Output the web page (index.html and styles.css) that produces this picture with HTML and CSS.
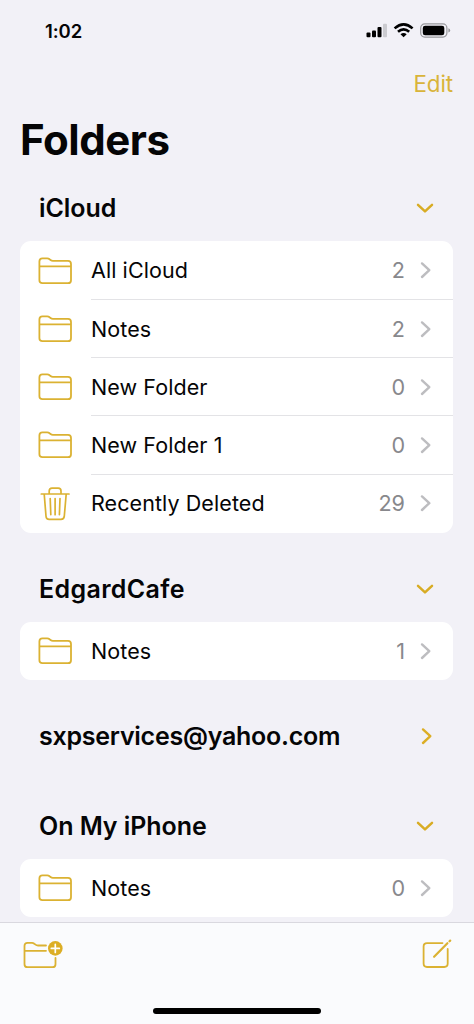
FILE: index.html
```html
<!DOCTYPE html>
<html lang="en">
<head>
<meta charset="utf-8">
<title>Folders</title>
<link rel="stylesheet" href="styles.css">
</head>
<body>
<svg class="defs" width="0" height="0" aria-hidden="true">
  <symbol id="folder" viewBox="0 0 36 30"><path d="M2.4 23.8V5.4Q2.4 2.4 5.4 2.4H10.2Q11.5 2.4 12.6 3.3L13.5 4Q14.6 4.9 16 4.9H31Q34 4.9 34 7.9V24.2Q34 27.2 31 27.2H5.4Q2.4 27.2 2.4 24.2ZM2.4 10.4H34"/></symbol>
  <symbol id="down" viewBox="0 0 20 12"><path d="M3 2.8L10 9.4L17 2.8"/></symbol>
  <symbol id="right" viewBox="0 0 12 20"><path d="M2 3.4L9.3 10.2L2 17"/></symbol>
</svg>
<div class="screen">
  <header class="status">
    <span class="time">1:02</span>
    <svg class="signals" width="86" height="18" viewBox="0 0 86 18">
      <rect x="0.5" y="10.5" width="4" height="4.7" rx="1"/><rect x="6" y="8.5" width="4" height="6.7" rx="1"/><rect x="11.5" y="4.9" width="4" height="10.3" rx="1"/><rect class="faint" x="17" y="1.7" width="4" height="13.5" rx="1"/>
      <g class="waves"><path d="M28.6 6.4Q37.6 -1.6 46.6 6.4"/><path d="M32 9.8Q37.6 4.9 43.2 9.8"/></g><path d="M34.5 12.2Q37.6 9.7 40.7 12.2L37.6 15.3Z"/>
      <rect class="shell" x="54.7" y="1.9" width="26.2" height="13.2" rx="4"/><rect x="56.8" y="3.7" width="21.5" height="9.6" rx="2.3"/><path class="tip" d="M82.4 6.3Q84.2 6.8 84.2 8.4T82.4 10.5Z"/>
    </svg>
  </header>
  <nav class="nav"><a class="edit">Edit</a></nav>
  <h1 class="title">Folders</h1>
  <main class="content">
    <section>
      <h2 class="head"><span>iCloud</span><svg class="icon down"><use href="#down"/></svg></h2>
      <ul class="card first">
        <li class="row"><svg class="icon folder"><use href="#folder"/></svg><div class="cell"><span class="label">All iCloud</span><span class="count">2</span><svg class="icon right"><use href="#right"/></svg></div></li>
        <li class="row"><svg class="icon folder"><use href="#folder"/></svg><div class="cell"><span class="label">Notes</span><span class="count">2</span><svg class="icon right"><use href="#right"/></svg></div></li>
        <li class="row"><svg class="icon folder"><use href="#folder"/></svg><div class="cell"><span class="label">New Folder</span><span class="count">0</span><svg class="icon right"><use href="#right"/></svg></div></li>
        <li class="row"><svg class="icon folder"><use href="#folder"/></svg><div class="cell"><span class="label">New Folder 1</span><span class="count">0</span><svg class="icon right"><use href="#right"/></svg></div></li>
        <li class="row"><svg class="icon trash" viewBox="0 0 36 36"><path d="M4.3 8H32M7.2 8L9 30.2Q9.2 33.4 12.2 33.4H24Q27 33.4 27.3 30.2L29.2 8M12.2 8V5Q12.2 2.2 15 2.2H21.2Q24 2.2 24 5V8M13.2 12.5L13.8 28.7M18.1 12.5V28.7M23 12.5L22.4 28.7"/></svg><div class="cell"><span class="label">Recently Deleted</span><span class="count">29</span><svg class="icon right"><use href="#right"/></svg></div></li>
      </ul>
    </section>
    <section>
      <h2 class="head wide"><span>EdgardCafe</span><svg class="icon down"><use href="#down"/></svg></h2>
      <ul class="card">
        <li class="row"><svg class="icon folder"><use href="#folder"/></svg><div class="cell"><span class="label">Notes</span><span class="count">1</span><svg class="icon right"><use href="#right"/></svg></div></li>
      </ul>
    </section>
    <section class="closed">
      <h2 class="head email"><span>sxpservices@yahoo.com</span><svg class="icon right gold"><use href="#right"/></svg></h2>
    </section>
    <section>
      <h2 class="head"><span>On My iPhone</span><svg class="icon down"><use href="#down"/></svg></h2>
      <ul class="card">
        <li class="row"><svg class="icon folder"><use href="#folder"/></svg><div class="cell"><span class="label">Notes</span><span class="count">0</span><svg class="icon right"><use href="#right"/></svg></div></li>
      </ul>
    </section>
  </main>
  <footer class="toolbar">
    <div class="tools">
      <svg class="icon new-folder" viewBox="0 0 42 30"><path d="M24 5.5H16Q14.6 5.5 13.5 4.6L12.3 3.7Q11.2 2.8 10 2.8H5.5Q2.5 2.8 2.5 5.8V24.2Q2.5 27.2 5.5 27.2H30.5Q33.5 27.2 33.5 24.2V18M2.5 10.8H24"/><circle class="disc" cx="33.3" cy="8.4" r="7.3"/><path class="plus" d="M29.3 8.4H37.3M33.3 4.4V12.4"/></svg>
      <svg class="icon compose" viewBox="0 0 32 32"><path d="M21.5 5.1H6Q2.6 5.1 2.6 8.5V25.6Q2.6 29 6 29H23.3Q26.7 29 26.7 25.6V11"/><path class="pencil" d="M13.1 18.8L26.4 5.2"/><path class="pencil" d="M28.5 3.3L29.2 2.6"/></svg>
    </div>
    <div class="home"></div>
  </footer>
</div>
</body>
</html>
```
FILE: styles.css
```css
* { box-sizing: border-box; }
body { margin: 0; background: #f2f1f7; color: #050506; font-family: Inter, "Liberation Sans", sans-serif; }
.defs { display: block; width: 0; height: 0; overflow: hidden; }
.screen { width: 474px; height: 1024px; display: flex; flex-direction: column; overflow: hidden; }
.status { height: 60px; flex: none; display: flex; justify-content: space-between; padding: 20px 22px 0 45px; }
.time { font-size: 18.5px; line-height: 22px; font-weight: 600; letter-spacing: -.1px; }
.signals { margin-top: 2px; display: block; }
.faint { fill: #cbcbd0; }
.waves { fill: none; stroke: #000; stroke-width: 2.6; }
.shell { fill: none; stroke: #97979b; stroke-width: 1.2; }
.tip { fill: #97979b; }
.nav { height: 46px; flex: none; display: flex; justify-content: flex-end; align-items: center; padding-right: 21px; }
.edit { color: #d9b43a; font-size: 22.4px; letter-spacing: -.1px; }
.title { margin: 0; height: 66px; flex: none; padding-left: 20px; font-size: 42px; line-height: 68px; font-weight: 700; letter-spacing: -.45px; }
.content { flex: 1; min-height: 0; padding: 3px 21px 0 20px; }
.head { margin: 0; height: 66px; display: flex; align-items: center; justify-content: space-between; padding: 0 18px 0 19px; font-size: 25px; font-weight: 600; letter-spacing: -.05px; }
.head.wide { letter-spacing: .35px; }
.head.email { letter-spacing: -.25px; }
.card { margin: 0 0 24px; padding: 0; list-style: none; background: #fff; border-radius: 11px; }
.card.first { padding-top: .8px; margin-bottom: 23.2px; }
.row { height: 58.2px; display: flex; align-items: center; padding-left: 17px; }
.cell { flex: 1; height: 100%; margin-left: 18px; display: flex; align-items: center; padding-right: 21px; border-bottom: 1px solid #e3e3e6; }
.row:last-child .cell { border-bottom-color: transparent; }
.label { flex: 1; font-size: 21.5px; letter-spacing: .08px; }
.count { color: #88888c; font-size: 21.6px; margin-right: 15px; }
.icon { display: block; flex: none; fill: none; stroke: #dbb232; stroke-width: 1.8; stroke-linecap: round; stroke-linejoin: round; }
.folder { width: 36px; height: 30px; }
.trash { width: 36px; height: 36px; stroke-width: 1.7; }
.down { width: 20px; height: 12px; stroke-width: 2.5; stroke: #d8ac24; }
.right { width: 12px; height: 20px; stroke: #bdbdc0; stroke-width: 2.4; }
.right.gold { stroke: #dcae25; margin-right: 2px; }
.closed { height: 89px; }
.closed .head { height: 64px; }
.toolbar { height: 102px; flex: none; background: #fafbfd; border-top: 1px solid #d9d8df; display: flex; flex-direction: column; align-items: center; justify-content: space-between; padding: 15px 21px 10px 22px; }
.tools { width: 100%; display: flex; justify-content: space-between; }
.new-folder { width: 42px; height: 30px; margin-top: 2px; }
.compose { width: 32px; height: 32px; }
.disc { fill: #dcae25; stroke: none; }
.plus { stroke: #fff; stroke-width: 1.7; }
.pencil { stroke-width: 2.2; }
.home { width: 168px; height: 6px; margin-right: 1px; border-radius: 3px; background: #000; }
```
